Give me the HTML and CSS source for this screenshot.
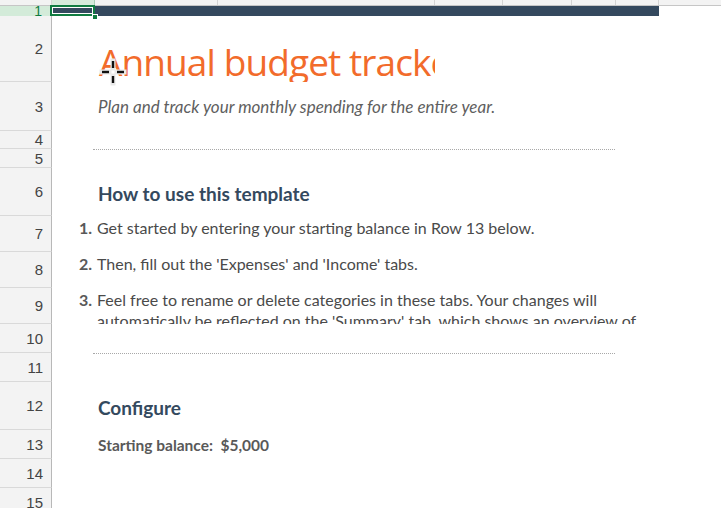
FILE: index.html
```html
<!DOCTYPE html>
<html>
<head>
<meta charset="utf-8">
<link rel="stylesheet" href="styles.css">
</head>
<body>
<div class="sheet">
  <div class="colhead">
    <div class="corner"></div>
    <div class="ch ch-a"></div>
    <div class="ch ch-b"></div>
    <div class="ch ch-c"></div>
    <div class="ch ch-d"></div>
    <div class="ch ch-e"></div>
    <div class="ch ch-f"></div>
    <div class="ch ch-g"></div>
    <div class="ch ch-h"></div>
  </div>

  <div class="row r1">
    <div class="rh sel">1</div>
    <div class="cells">
      <div class="bar"></div>
      <div class="selbox"><span class="handle"></span></div>
    </div>
  </div>

  <div class="row r2">
    <div class="rh">2</div>
    <div class="cells">
      <div class="title-clip"><h1 class="title">Annual budget tracker</h1></div>
      <svg class="cursor" width="28" height="28" viewBox="0 0 28 28">
        <g stroke="#e8e8e8" stroke-width="5" stroke-linecap="square">
          <line x1="14" y1="3" x2="14" y2="10"/>
          <line x1="14" y1="18" x2="14" y2="25"/>
          <line x1="3" y1="14" x2="10" y2="14"/>
          <line x1="18" y1="14" x2="25" y2="14"/>
        </g>
        <g stroke="#111" stroke-width="2.4" stroke-linecap="butt">
          <line x1="14" y1="3" x2="14" y2="10"/>
          <line x1="14" y1="18" x2="14" y2="25"/>
          <line x1="3" y1="14" x2="10" y2="14"/>
          <line x1="18" y1="14" x2="25" y2="14"/>
        </g>
      </svg>
    </div>
  </div>

  <div class="row r3">
    <div class="rh">3</div>
    <div class="cells center"><p class="subtitle">Plan and track your monthly spending for the entire year.</p></div>
  </div>

  <div class="row r4">
    <div class="rh">4</div>
    <div class="cells"><div class="dots"></div></div>
  </div>

  <div class="row r5">
    <div class="rh">5</div>
    <div class="cells"></div>
  </div>

  <div class="row r6">
    <div class="rh">6</div>
    <div class="cells center"><h2 class="heading">How to use this template</h2></div>
  </div>

  <div class="row r7">
    <div class="rh">7</div>
    <div class="cells"><div class="step"><b>1.</b><span>Get started by entering your starting balance in Row 13 below.</span></div></div>
  </div>

  <div class="row r8">
    <div class="rh">8</div>
    <div class="cells"><div class="step"><b>2.</b><span>Then, fill out the 'Expenses' and 'Income' tabs.</span></div></div>
  </div>

  <div class="row r9">
    <div class="rh">9</div>
    <div class="cells clip"><div class="step"><b>3.</b><span class="wrap">Feel free to rename or delete categories in these tabs. Your changes will automatically be reflected on the 'Summary' tab, which shows an overview of</span></div></div>
  </div>

  <div class="row r10">
    <div class="rh">10</div>
    <div class="cells"><div class="dots"></div></div>
  </div>

  <div class="row r11">
    <div class="rh">11</div>
    <div class="cells"></div>
  </div>

  <div class="row r12">
    <div class="rh">12</div>
    <div class="cells center"><h2 class="heading">Configure</h2></div>
  </div>

  <div class="row r13">
    <div class="rh">13</div>
    <div class="cells center"><p class="balance">Starting balance:&nbsp; $5,000</p></div>
  </div>

  <div class="row r14">
    <div class="rh">14</div>
    <div class="cells"></div>
  </div>

  <div class="row r15">
    <div class="rh">15</div>
    <div class="cells"></div>
  </div>
</div>
</body>
</html>
```

FILE: styles.css
```css
* { box-sizing: border-box; }
html, body { margin: 0; padding: 0; background: #fff; }
body { width: 721px; height: 508px; overflow: hidden; font-family: Lato, "Liberation Sans", sans-serif; }

.sheet { display: flex; flex-direction: column; }

.colhead { display: flex; height: 6px; background: #f3f3f3; border-bottom: 1px solid #c6c6c6; }
.corner { width: 52px; border-right: 1px solid #d4d4d4; }
.ch { height: 5px; border-right: 1px solid #d4d4d4; }
.ch-a { width: 43px; background: #d6eadb; border-right-color: #a9cdb5; }
.ch-b { width: 123px; }
.ch-c { width: 217px; }
.ch-d { width: 68px; }
.ch-e { width: 69px; }
.ch-f { width: 44px; }
.ch-g { width: 43px; }
.ch-h { flex: 1; border-right: none; }

.row { display: flex; }
.rh {
  width: 52px; flex: none;
  background: #f3f3f3;
  border-right: 1px solid #b8b8b8;
  border-bottom: 1px solid #d9d9d9;
  color: #444;
  font-family: "Liberation Sans", Arial, sans-serif;
  font-size: 15px;
  display: flex; align-items: center; justify-content: flex-end;
  padding-right: 8px;
}
.rh.sel { background: #d3ebd9; color: #107c41; border-right: 2px solid #107c41; border-bottom: none; font-size: 14px; line-height: 10px; }
.cells { flex: 1; position: relative; display: flex; }
.cells.center { align-items: center; }
.cells.clip { overflow: hidden; }

.r1 { height: 10px; }
.r2 { height: 66px; }
.r3 { height: 49px; }
.r4 { height: 18px; }
.r5 { height: 19px; }
.r6 { height: 48px; }
.r7 { height: 36px; }
.r8 { height: 36px; }
.r9 { height: 36px; }
.r10 { height: 29px; }
.r11 { height: 29px; }
.r12 { height: 48px; }
.r13 { height: 29px; }
.r14 { height: 29px; }
.r15 { height: 29px; }

.bar { width: 607px; height: 10px; background: #34495e; }
.selbox {
  position: absolute; left: -2px; top: -1px;
  width: 45px; height: 11px;
  border: 2px solid #107c41;
  box-shadow: inset 0 0 0 1px #fff;
}
.handle {
  position: absolute; right: -5px; bottom: -6px;
  width: 6px; height: 6px; background: #107c41;
  border: 1px solid #fff;
}

.title-clip { width: 383px; overflow: hidden; display: flex; align-items: flex-end; }
.title {
  margin: 0 0 0 47px;
  white-space: nowrap;
  font-family: "Open Sans", Lato, sans-serif;
  font-weight: 400;
  font-size: 37px;
  letter-spacing: -0.9px;
  color: #f26b2b;
  line-height: 41px;
}
.cursor { position: absolute; left: 47px; top: 42px; }

.subtitle { margin: 0 0 0 46px; font-style: italic; font-size: 17px; color: #5f5f5f; }

.dots { position: absolute; left: 41px; bottom: -1px; width: 522px; height: 1px; border-bottom: 1px dotted #a8a8a8; }

.heading { margin: 2px 0 0 46px; font-size: 19px; font-weight: 700; color: #34495e; }

.step { display: flex; margin-left: 27px; padding-top: 1px; font-size: 16px; line-height: 21px; color: #4a4a4a; }
.step b { width: 18px; flex: none; color: #595959; }
.step .wrap { width: 545px; }

.balance { margin: 0 0 0 46px; font-size: 15.5px; font-weight: 700; color: #595959; }
```
